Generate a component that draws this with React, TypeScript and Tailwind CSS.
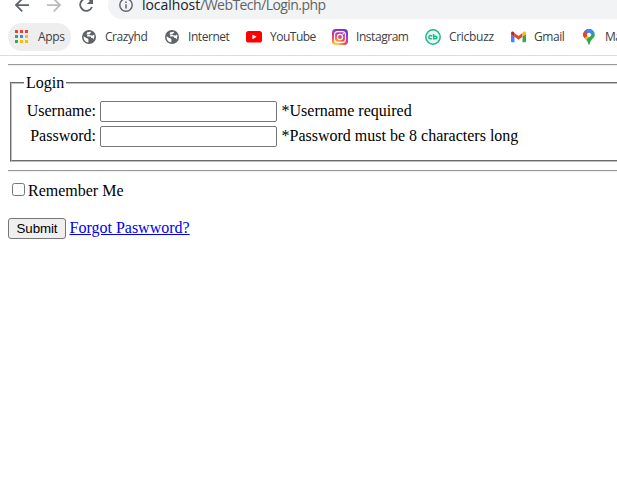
import type { ReactNode } from "react";

function Globe() {
  return (
    <svg width="14" height="14" viewBox="0 0 14 14" className="block">
      <circle cx="7" cy="7" r="7" fill="#5f6368" />
      <path d="M1.6 6.2 4.6 8.2Q6.4 8.2 6.4 9.6V12.4Q2 12 1.6 7.5Z" fill="#fff" />
      <path d="M5.3 2.2 9 1.7Q9.5 3.4 7.6 3.7L7.2 5H5.2V6.4H8.6L9.3 8H10.6L11.4 9.6Q13 7.5 12.2 4.6L10.4 5.6 8 5.2 6.6 4.4 4.4 4.6Z" fill="#fff" />
    </svg>
  );
}

function YouTube() {
  return (
    <svg width="16" height="12" viewBox="0 0 16 12" className="block">
      <rect width="16" height="11.6" rx="2.6" fill="#f00" />
      <path d="M6.4 3.4 10.6 5.8 6.4 8.2Z" fill="#fff" />
    </svg>
  );
}

function Instagram() {
  return (
    <svg width="16" height="16" viewBox="0 0 16 16" className="block">
      <defs>
        <radialGradient id="ig" cx="0.27" cy="1.05" r="1.05">
          <stop offset="0" stopColor="#fd5" />
          <stop offset="0.2" stopColor="#fdbb45" />
          <stop offset="0.5" stopColor="#f4503f" />
          <stop offset="0.75" stopColor="#c837ab" />
          <stop offset="1" stopColor="#6540d0" />
        </radialGradient>
      </defs>
      <rect width="16" height="16" rx="3.8" fill="url(#ig)" />
      <rect x="2.6" y="2.6" width="10.8" height="10.8" rx="3" fill="none" stroke="#fff" strokeWidth="1.1" />
      <circle cx="8" cy="8" r="2.6" fill="none" stroke="#fff" strokeWidth="1.2" />
      <circle cx="11.3" cy="4.8" r="0.7" fill="#fff" />
    </svg>
  );
}

function Cricbuzz() {
  return (
    <svg width="16" height="16" viewBox="0 0 16 16" className="block">
      <circle cx="8" cy="8" r="7.2" fill="#e4f7f1" stroke="#20b690" strokeWidth="1.5" />
      <path d="M7.1 7Q4.2 5.8 3.9 8.3 4.2 10.3 6.8 9.5M8.6 5.1V9.8H10.4Q12.2 9.5 11.8 8 11.2 7 8.8 7.4" fill="none" stroke="#20b690" strokeWidth="1.5" />
    </svg>
  );
}

function Gmail() {
  return (
    <svg width="15" height="12" viewBox="0 0 15 12" className="block">
      <path d="M0 3 3.5 5.5V11.2H1Q0 11.2 0 10.2Z" fill="#4285f4" />
      <path d="M15 3 11.5 5.5V11.2H14Q15 11.2 15 10.2Z" fill="#34a853" />
      <path d="M3.5 2 7.5 5 11.5 2V5.8L7.5 8.8 3.5 5.8Z" fill="#ea4335" />
      <path d="M0 3V2Q.2 0 2 .6L3.5 1.8V5.8Z" fill="#c5221f" />
      <path d="M15 3V2Q14.8 0 13 .6L11.5 1.8V5.8Z" fill="#fbbc04" />
    </svg>
  );
}

function MapPin() {
  return (
    <svg width="12" height="16" viewBox="0 0 12 16" className="block">
      <defs>
        <clipPath id="pin">
          <path d="M6 0A5.8 5.8 0 0 1 11.8 5.8C11.8 9.3 7.3 10.8 6.8 14.8Q6.6 15.8 6 15.8T5.2 14.8C4.7 10.8.2 9.3.2 5.8A5.8 5.8 0 0 1 6 0Z" />
        </clipPath>
      </defs>
      <g clipPath="url(#pin)">
        <rect width="12" height="16" fill="#34a853" />
        <path d="M0 10 11 -2V-4H0Z" fill="#1a73e8" />
        <path d="M0 0 6 5.8 1 11H-2Z" fill="#ea4335" />
        <path d="M0 10 6 5.8 9 5 2.4 12Z" fill="#fbbc04" />
        <path d="M4 0H13V4L6 5.8 1.5 1.5Z" fill="#4285f4" />
      </g>
      <circle cx="6" cy="5.8" r="2.1" fill="#fff" />
    </svg>
  );
}

function Apps() {
  const colors = ["#ea4335", "#ea4335", "#ea4335", "#34a853", "#4285f4", "#fbbc04", "#34a853", "#fbbc04", "#fbbc04"];
  return (
    <svg width="14" height="14" viewBox="0 0 14 14" className="block" shapeRendering="crispEdges">
      {colors.map((c, i) => (
        <rect key={i} x={(i % 3) * 5} y={Math.floor(i / 3) * 5} width="3" height="3" fill={c} />
      ))}
    </svg>
  );
}

function Bookmark({ icon, label, className, labelClass }: { icon: ReactNode; label: string; className: string; labelClass: string }) {
  return (
    <div className={`flex h-7 shrink-0 items-center ${className}`}>
      <span className="shrink-0">{icon}</span>
      <span className={`whitespace-nowrap pb-px ${labelClass}`}>{label}</span>
    </div>
  );
}

function Toolbar() {
  return (
    <div className="flex h-[19px] items-start overflow-hidden">
      <svg width="108" height="19" viewBox="0 0 108 19" className="block shrink-0" fill="none" strokeWidth="1.8">
        <path d="M29 5.1H16.5M22.2-1.1 16 5.1 22.2 11.3" stroke="#5f6368" />
        <path d="M47 5.1H59.5M53.8-1.1 60 5.1 53.8 11.3" stroke="#babcbe" />
        <path d="M91.2 1.2A6.1 6.1 0 1 0 91.9 7" stroke="#5f6368" />
        <path d="M93-2V4.1H86.8Z" fill="#5f6368" />
      </svg>
      <div className="-mt-[9px] flex h-7 w-[540px] shrink-0 items-center rounded-l-full bg-[#f1f3f4] pl-[11px]">
        <svg width="14" height="14" viewBox="0 0 14 14" className="block shrink-0" fill="none" stroke="#5f6368">
          <circle cx="7" cy="7" r="6.2" strokeWidth="1.4" />
          <path d="M7 6.2V10.4M7 3.5V5" strokeWidth="1.5" />
        </svg>
        <span className="ml-[9px] whitespace-nowrap pb-px text-[14px] leading-[19px] tracking-[-0.06px] text-[#202124]">
          localhost<span className="tracking-[-0.55px] text-[#5f6368]">/WebTech/Login.php</span>
        </span>
      </div>
    </div>
  );
}

export default function App() {
  return (
    <div className="h-[488px] w-[617px] overflow-hidden bg-white font-['Open_Sans',sans-serif]">
      <Toolbar />
      <div className="flex h-[37px] items-center overflow-hidden border-b border-[#dadce0] pl-2 text-[12px] leading-[17px] tracking-[-0.45px] text-[#3c4043]">
        <Bookmark icon={<Apps />} label="Apps" className="mr-[11px] w-[63px] rounded-full bg-[#eee] pl-[7px]" labelClass="ml-[9px] tracking-[-0.3px]" />
        <Bookmark icon={<Globe />} label="Crazyhd" className="w-[83px]" labelClass="ml-[9px]" />
        <Bookmark icon={<Globe />} label="Internet" className="w-[81px]" labelClass="ml-[9px]" />
        <Bookmark icon={<YouTube />} label="YouTube" className="w-[86px]" labelClass="ml-2 tracking-[-0.5px]" />
        <Bookmark icon={<Instagram />} label="Instagram" className="w-[93px]" labelClass="ml-2" />
        <Bookmark icon={<Cricbuzz />} label="Cricbuzz" className="w-[86px]" labelClass="ml-2 tracking-[-0.3px]" />
        <Bookmark icon={<Gmail />} label="Gmail" className="w-[72px]" labelClass="ml-2" />
        <Bookmark icon={<MapPin />} label="Maps" className="w-[60px]" labelClass="ml-[10px]" />
      </div>
      <main className="w-[680px] px-2 pt-2 font-['Liberation_Serif',serif] text-[16px] leading-[18px] text-black">
        <hr className="h-[2px] border-t border-b border-t-[#9a9a9a] border-b-[#eeeeee]" />
        <fieldset className="mx-[2px] mt-2 h-[88px] border-2 border-[#c0c0c0] [border-style:groove] px-3">
          <legend className="px-[2px]">Login</legend>
          <div className="mt-[9px] flex h-[21px] items-start">
            <label className="mt-px w-[73px] pr-[1px] text-right" htmlFor="username">Username:</label>
            <input id="username" className="ml-[3px] h-[21px] w-[177px] rounded-[2px] border border-[#767676] bg-white" />
            <span className="mt-px ml-[4.5px]">*Username required</span>
          </div>
          <div className="mt-1 flex h-[21px] items-start">
            <label className="mt-px w-[73px] pr-[1px] text-right" htmlFor="password">Password:</label>
            <input id="password" type="password" className="ml-[3px] h-[21px] w-[177px] rounded-[2px] border border-[#767676] bg-white" />
            <span className="mt-px ml-[4.5px]">*Password must be 8 characters long</span>
          </div>
        </fieldset>
        <hr className="mt-2 h-[2px] border-t border-b border-t-[#9a9a9a] border-b-[#eeeeee]" />
        <label className="mt-[10px] flex h-[18px] items-center pl-1">
          <input type="checkbox" className="-mt-[3px] mr-[3px] h-[13px] w-[13px] appearance-none rounded-[2.5px] border border-[#767676] bg-white" />
          <span>Remember Me</span>
        </label>
        <div className="mt-[18px] flex h-[21px] items-center">
          <button className="h-[21px] w-[58px] rounded-[3px] border border-[#767676] bg-[#efefef] font-['Liberation_Sans',sans-serif] text-[13.333px] leading-[15px] tracking-[-0.1px]">Submit</button>
          <a href="#" className="ml-[3.5px] pb-px text-[#0000ee] underline">Forgot Paswword?</a>
        </div>
      </main>
    </div>
  );
}
